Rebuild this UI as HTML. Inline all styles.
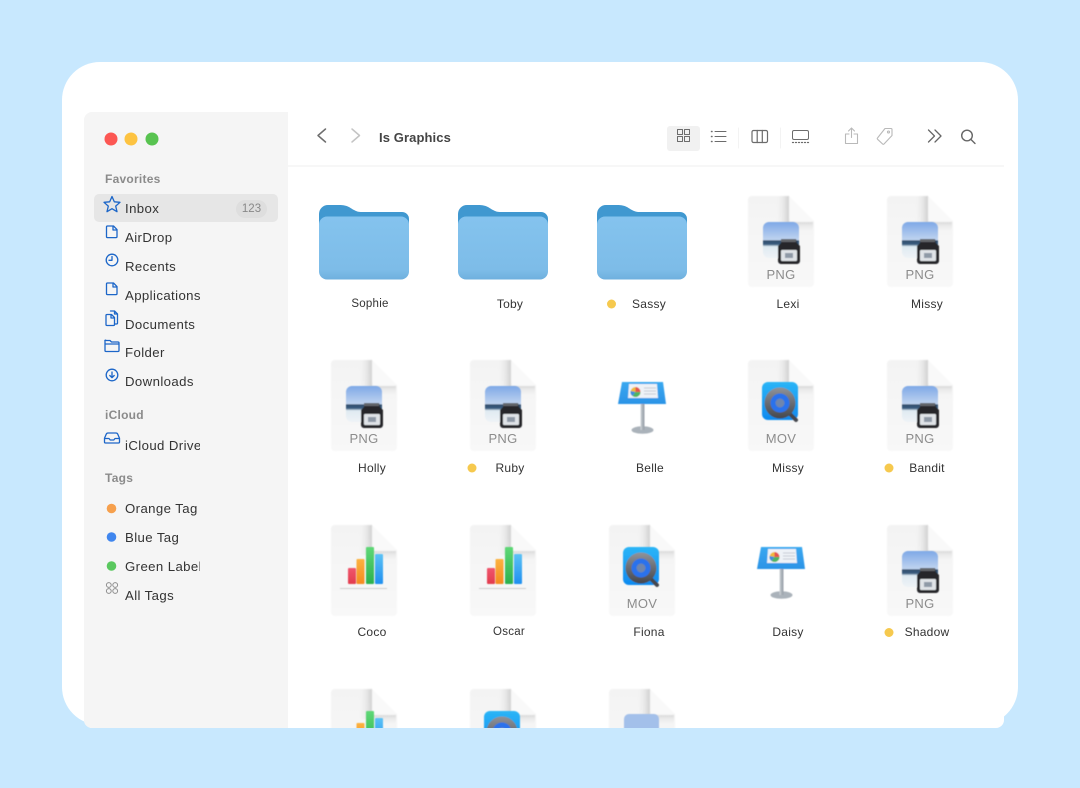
<!DOCTYPE html>
<html><head><meta charset="utf-8"><title>Finder</title>
<style>
html,body{margin:0;padding:0;width:1080px;height:788px;overflow:hidden;background:#c8e8fe;font-family:"Liberation Sans",sans-serif}
#card{position:absolute;left:62px;top:62px;width:956px;height:663px;background:#fff;border-radius:38px}
#win{position:absolute;left:0;top:0;width:1080px;height:788px;clip-path:inset(112px 76px 60px 84px round 8px)}
#white{position:absolute;left:84px;top:112px;width:920px;height:616px;background:#fff}
#side{position:absolute;left:84px;top:112px;width:204px;height:616px;background:#f5f5f5}
#sel{position:absolute;left:94px;top:194px;width:184px;height:28px;background:#e6e6e6;border-radius:5px}
#badge{position:absolute;left:236px;top:200px;width:31px;height:18px;line-height:18px;border-radius:9px;background:#dedede;color:#888;font-size:11.5px;text-align:center}
#line{position:absolute;left:288px;top:165px;width:716px;height:2px;background:#f7f7f7}
#sel2{position:absolute;left:667px;top:126px;width:33px;height:25px;background:#f1f1f1;border-radius:3px}
.h{position:absolute;left:105px;font-size:12px;font-weight:bold;color:#8b8b8b;line-height:14px;letter-spacing:.25px}
.s{position:absolute;left:125px;font-size:13.2px;color:#333;line-height:16px;letter-spacing:.4px;white-space:nowrap;overflow:hidden}
.l{position:absolute;width:100px;text-align:center;font-size:12px;color:#333;line-height:14px;letter-spacing:.25px}
#title{position:absolute;left:379px;top:130px;font-size:13px;font-weight:bold;color:#444;line-height:15px;letter-spacing:.1px}
svg{position:absolute;left:0;top:0}
.ft{font:13px "Liberation Sans",sans-serif;fill:#8c8c8c;text-anchor:middle;letter-spacing:.3px}
</style></head><body>
<div id="card"></div>
<div id="win">
<div id="white"></div><div id="side"></div><div id="sel"></div><div id="badge">123</div><div id="line"></div><div id="sel2"></div>

<svg width="1080" height="788" viewBox="0 0 1080 788">
<defs>
<linearGradient id="pg" x1="0" y1="0" x2="0" y2="1"><stop offset="0" stop-color="#f3f3f3"/><stop offset="1" stop-color="#f8f8f8"/></linearGradient>
<linearGradient id="sh" x1="0" y1="0" x2="1" y2="0"><stop offset="0" stop-color="#f2f2f2" stop-opacity="0"/><stop offset="1" stop-color="#cfcfcf"/></linearGradient>
<linearGradient id="sh2" x1="0" y1="0" x2="0" y2="1"><stop offset="0" stop-color="#d8d8d8"/><stop offset="1" stop-color="#f4f4f4" stop-opacity="0"/></linearGradient>
<linearGradient id="fd" x1="0" y1="0" x2="0" y2="1"><stop offset="0" stop-color="#84c3ee"/><stop offset=".85" stop-color="#7dbce8"/><stop offset="1" stop-color="#6fb0de"/></linearGradient>
<linearGradient id="sky" x1="0" y1="0" x2="0" y2="1"><stop offset="0" stop-color="#7ea8e6"/><stop offset=".5" stop-color="#c0d4f0"/><stop offset=".52" stop-color="#2f4c6b"/><stop offset=".62" stop-color="#3b5d80"/><stop offset=".68" stop-color="#dfeaf2"/><stop offset="1" stop-color="#eef3f6"/></linearGradient>
<linearGradient id="qb" x1="0" y1="0" x2="0" y2="1"><stop offset="0" stop-color="#2bb5f7"/><stop offset="1" stop-color="#0e8af0"/></linearGradient>
<linearGradient id="qr" x1="0" y1="0" x2="0" y2="1"><stop offset="0" stop-color="#8f939a"/><stop offset="1" stop-color="#45474d"/></linearGradient>
<linearGradient id="kb" x1="0" y1="0" x2="0" y2="1"><stop offset="0" stop-color="#3aa8f0"/><stop offset="1" stop-color="#2b93e6"/></linearGradient>
<linearGradient id="st" x1="0" y1="0" x2="1" y2="0"><stop offset="0" stop-color="#d4d8dc"/><stop offset=".5" stop-color="#a9b0b8"/><stop offset="1" stop-color="#98a0a8"/></linearGradient>
<linearGradient id="b1" x1="0" y1="0" x2="0" y2="1"><stop offset="0" stop-color="#f0566d"/><stop offset="1" stop-color="#e23b4d"/></linearGradient>
<linearGradient id="b2" x1="0" y1="0" x2="0" y2="1"><stop offset="0" stop-color="#fbb23f"/><stop offset="1" stop-color="#f58a1f"/></linearGradient>
<linearGradient id="b3" x1="0" y1="0" x2="0" y2="1"><stop offset="0" stop-color="#5fd876"/><stop offset="1" stop-color="#2bb04e"/></linearGradient>
<linearGradient id="b4" x1="0" y1="0" x2="0" y2="1"><stop offset="0" stop-color="#5cc2f5"/><stop offset="1" stop-color="#1f8ff0"/></linearGradient>
<filter id="bl" x="-10%" y="-10%" width="120%" height="120%"><feGaussianBlur stdDeviation=".5"/></filter>
<filter id="bl2" x="-10%" y="-10%" width="120%" height="120%"><feGaussianBlur stdDeviation=".8"/></filter>
<filter id="bl3" x="-5%" y="-5%" width="110%" height="110%"><feGaussianBlur stdDeviation=".3"/></filter>

<g id="folder">
<path d="M0 9a9 9 0 0 1 9-9H20c9 0 11 3 15 5c3 1.500 4 2 8 2H83a7 7 0 0 1 7 7V30H0z" fill="#4098d0"/>
<rect x="0" y="11.500" width="90" height="63" rx="8" fill="url(#fd)"/>
</g>

<g id="doc" filter="url(#bl2)">
<path d="M4 0H41L66 25V87a4 4 0 0 1-4 4H4a4 4 0 0 1-4-4V4a4 4 0 0 1 4-4z" fill="url(#pg)"/>
<rect x="28" y="0" width="13" height="30" fill="url(#sh)"/>
<rect x="41" y="26" width="24" height="10" fill="url(#sh2)"/>
<path d="M41 0L66 25L62 26H45a4 4 0 0 1-4-4z" fill="#f9f9f9"/>
</g>

<g id="png" filter="url(#bl)">
<rect x="15" y="26" width="36" height="36" rx="6" fill="url(#sky)"/>
<path d="M33 43h15l1 4 3 3v15a3 3 0 0 1-3 3H33a3 3 0 0 1-3-3V50l3-3z" fill="#26282c"/>
<rect x="33" y="43" width="15" height="3" fill="#62656b"/>
<rect x="33" y="54" width="16" height="11" rx="1" fill="#dfe3e7"/>
<rect x="37" y="57" width="8" height="5" fill="#8f9aa7"/>
</g>

<g id="mov" filter="url(#bl)">
<rect x="14" y="22" width="36" height="38" rx="6" fill="url(#qb)"/>
<path d="M41 53l7 7" stroke="#45474d" stroke-width="4" stroke-linecap="round"/>
<circle cx="32" cy="43" r="15.500" fill="url(#qr)"/>
<circle cx="32" cy="43" r="9.500" fill="#2a72ec"/>
<circle cx="32" cy="43" r="4.500" fill="#6f86ad"/>
</g>

<g id="chart" filter="url(#bl)">
<rect x="17" y="43" width="8" height="16" rx="1" fill="url(#b1)"/>
<rect x="25.500" y="34" width="8" height="25" rx="1" fill="url(#b2)"/>
<rect x="35" y="22" width="8" height="37" rx="1" fill="url(#b3)"/>
<rect x="44" y="29" width="8" height="30" rx="1" fill="url(#b4)"/>
<rect x="9" y="63" width="47" height="1" fill="#cfcfcf"/>
</g>

<g id="key" filter="url(#bl)">
<ellipse cx="33.500" cy="70" rx="11" ry="3.800" fill="#aab2ba"/>
<rect x="31.500" y="43" width="4" height="27" fill="url(#st)"/>
<path d="M13 22H54L57 44H9z" fill="url(#kb)"/>
<path d="M20 24H48L49 38H19z" fill="#eef2f7"/>
<circle cx="26.500" cy="32" r="5" fill="#f0b93a"/>
<path d="M26.500 32V27A5 5 0 0 1 31.500 32z" fill="#e4534f"/>
<path d="M26.500 32H31.500A5 5 0 0 1 23.500 36z" fill="#4db564"/>
<path d="M26.500 32L23.500 36A5 5 0 0 1 21.500 31z" fill="#3b8de0"/>
<path d="M35 28h12M35 31h12M35 34h12" stroke="#c6cbd3" stroke-width="1"/>
</g>
</defs>

<!-- traffic lights -->
<circle cx="111" cy="139" r="6.500" fill="#fc5753"/>
<circle cx="131" cy="139" r="6.500" fill="#fdc341"/>
<circle cx="152" cy="139" r="6.500" fill="#58c350"/>

<!-- sidebar icons -->
<g fill="none" stroke="#1c66c8" stroke-width="1.300" stroke-linejoin="round" stroke-linecap="round" filter="url(#bl3)">
<path d="M112 196.500l2.300 5.300 5.700.5-4.300 3.800 1.300 5.600-5-3-5 3 1.300-5.600-4.300-3.800 5.700-.5z"/>
<path d="M107.500 226h6l3.500 3.600v7a1 1 0 0 1-1 1h-8.500a1 1 0 0 1-1-1v-9.600a1 1 0 0 1 1-1zM113 226v4h4"/>
<circle cx="112" cy="260" r="5.800"/><path d="M112 256.500v3.800h-3"/>
<path d="M107.500 283h6l3.500 3.600v7a1 1 0 0 1-1 1h-8.500a1 1 0 0 1-1-1v-9.600a1 1 0 0 1 1-1zM113 283v4h4"/>
<path d="M110.500 311h4l3 3v9a1 1 0 0 1-1 1h-2M114.500 311v3h3"/>
<path d="M107 314.500h4.500l3 3v7a1 1 0 0 1-1 1H107a1 1 0 0 1-1-1v-9a1 1 0 0 1 1-1zM111 314.500v3.500h3.500"/>
<path d="M106 340.500h4l1.500 1.500h6.500a1 1 0 0 1 1 1v7.500a1 1 0 0 1-1 1h-12a1 1 0 0 1-1-1v-9.500a.5.500 0 0 1 1-.5zM105 344h14"/>
<circle cx="112" cy="375" r="5.800"/><path d="M112 372v5.500M109.800 375.500l2.200 2.200 2.200-2.200"/>
<path d="M108 433h8a2 2 0 0 1 1.800 1.200l1.700 4V442a1 1 0 0 1-1 1h-13a1 1 0 0 1-1-1v-3.800l1.700-4A2 2 0 0 1 108 433zM104.700 438.500h4.300l1.200 1.500h3.600l1.200-1.500h4.300"/>
</g>
<circle cx="111.500" cy="508.500" r="4.800" fill="#f6a04d"/>
<circle cx="111.500" cy="537" r="4.800" fill="#4086ee"/>
<circle cx="111.500" cy="566" r="4.800" fill="#5ac85f"/>
<g fill="none" stroke="#8e8e8e" stroke-width="1"><circle cx="108.800" cy="585" r="2.400"/><circle cx="115.200" cy="585" r="2.400"/><circle cx="108.800" cy="591" r="2.400"/><circle cx="115.200" cy="591" r="2.400"/></g>

<!-- toolbar icons -->
<g fill="none" stroke-linecap="round" stroke-linejoin="round" filter="url(#bl3)">
<path d="M325.500 129l-7.500 6.500 7.500 6.500" stroke="#6e6e6e" stroke-width="1.500"/>
<path d="M352 129l7.500 6.500-7.500 6.500" stroke="#c4c4c4" stroke-width="1.500"/>
<g stroke="#6c6c6c" stroke-width="1"><rect x="677.500" y="129.500" width="5" height="5" /><rect x="684.500" y="129.500" width="5" height="5"/><rect x="677.500" y="136.500" width="5" height="5"/><rect x="684.500" y="136.500" width="5" height="5"/>
<path d="M715 131.500h11M715 136.500h11M715 141.500h11"/><path d="M711.500 131.500h.5M711.500 136.500h.5M711.500 141.500h.5" stroke-width="1.500"/>
<rect x="752" y="130.500" width="15.500" height="12" rx="1.500" stroke-width="1.200"/><path d="M757.200 130.500v12M762.300 130.500v12" stroke-width="1.200"/>
<rect x="792.500" y="130.500" width="16" height="9" rx="1.500"/><path d="M792.500 142.500h1M795.500 142.500h1M798.500 142.500h1M801.500 142.500h1M804.500 142.500h1M807.500 142.500h1" stroke-width="1.300"/></g>
<path d="M738.500 128v20M780.500 128v20" stroke="#f3f3f3" stroke-width="1"/>
<g stroke="#b9b9b9" stroke-width="1.100"><path d="M849 134h-3.500v9.500h12V134H854M851.500 137.500V128.500M848.500 131l3-3 3 3"/>
<path d="M885 128.500h6a1 1 0 0 1 1 1v6l-8 8.500a1 1 0 0 1-1.400 0l-5-4.700a1 1 0 0 1 0-1.400z"/><circle cx="888.500" cy="132" r="1"/></g>
<g stroke="#666" stroke-width="1.300"><path d="M928.500 130l6 6-6 6M935 130l6 6-6 6"/></g>
<g stroke="#666" stroke-width="1.400"><circle cx="967" cy="135.500" r="5.300"/><path d="M971 139.500l4 4"/></g>
</g>

<!-- folders -->
<use href="#folder" x="319" y="205"/><use href="#folder" x="458" y="205"/><use href="#folder" x="597" y="205"/>

<!-- row 1 -->
<use href="#doc" x="748" y="196"/><use href="#png" x="748" y="196"/><text class="ft" x="781" y="279">PNG</text>
<use href="#doc" x="887" y="196"/><use href="#png" x="887" y="196"/><text class="ft" x="920" y="279">PNG</text>
<!-- row 2 -->
<use href="#doc" x="331" y="360"/><use href="#png" x="331" y="360"/><text class="ft" x="364" y="443">PNG</text>
<use href="#doc" x="470" y="360"/><use href="#png" x="470" y="360"/><text class="ft" x="503" y="443">PNG</text>
<use href="#key" x="609" y="360"/>
<use href="#doc" x="748" y="360"/><use href="#mov" x="748" y="360"/><text class="ft" x="781" y="443">MOV</text>
<use href="#doc" x="887" y="360"/><use href="#png" x="887" y="360"/><text class="ft" x="920" y="443">PNG</text>
<!-- row 3 -->
<use href="#doc" x="331" y="525"/><use href="#chart" x="331" y="525"/>
<use href="#doc" x="470" y="525"/><use href="#chart" x="470" y="525"/>
<use href="#doc" x="609" y="525"/><use href="#mov" x="609" y="525"/><text class="ft" x="642" y="608">MOV</text>
<use href="#key" x="748" y="525"/>
<use href="#doc" x="887" y="525"/><use href="#png" x="887" y="525"/><text class="ft" x="920" y="608">PNG</text>
<!-- row 4 -->
<use href="#doc" x="331" y="689"/><use href="#chart" x="331" y="689"/>
<use href="#doc" x="470" y="689"/><use href="#mov" x="470" y="689"/>
<use href="#doc" x="609" y="689"/><rect x="624" y="714" width="35" height="30" rx="5" fill="#a3c0ea" filter="url(#bl)"/>

<!-- label dots -->
<circle cx="611.500" cy="304" r="4.500" fill="#f6c94e"/>
<circle cx="472" cy="468" r="4.500" fill="#f6c94e"/>
<circle cx="889" cy="468" r="4.500" fill="#f6c94e"/>
<circle cx="889" cy="632.500" r="4.500" fill="#f6c94e"/>
</svg>

<div id="title">Is Graphics</div>

<div class="h" style="top:172px">Favorites</div>
<div class="s" style="top:201px">Inbox</div>
<div class="s" style="top:230px">AirDrop</div>
<div class="s" style="top:259px">Recents</div>
<div class="s" style="top:288px;width:77px">Applications</div>
<div class="s" style="top:317px">Documents</div>
<div class="s" style="top:345px">Folder</div>
<div class="s" style="top:374px">Downloads</div>
<div class="h" style="top:408px">iCloud</div>
<div class="s" style="top:438px;width:75px">iCloud Drive</div>
<div class="h" style="top:471px">Tags</div>
<div class="s" style="top:501px">Orange Tag</div>
<div class="s" style="top:530px">Blue Tag</div>
<div class="s" style="top:559px;width:74.500px">Green Label</div>
<div class="s" style="top:588px">All Tags</div>

<div class="l" style="left:320px;top:297px;font-size:11.500px">Sophie</div>
<div class="l" style="left:460px;top:297px">Toby</div>
<div class="l" style="left:599px;top:297px">Sassy</div>
<div class="l" style="left:738px;top:297px">Lexi</div>
<div class="l" style="left:877px;top:297px">Missy</div>

<div class="l" style="left:322px;top:461px">Holly</div>
<div class="l" style="left:460px;top:461px">Ruby</div>
<div class="l" style="left:600px;top:461px">Belle</div>
<div class="l" style="left:738px;top:461px">Missy</div>
<div class="l" style="left:877px;top:461px">Bandit</div>

<div class="l" style="left:322px;top:625px">Coco</div>
<div class="l" style="left:459px;top:625px;font-size:11.500px">Oscar</div>
<div class="l" style="left:599px;top:625px">Fiona</div>
<div class="l" style="left:738px;top:625px">Daisy</div>
<div class="l" style="left:877px;top:625px">Shadow</div>
</div>
</body></html>
